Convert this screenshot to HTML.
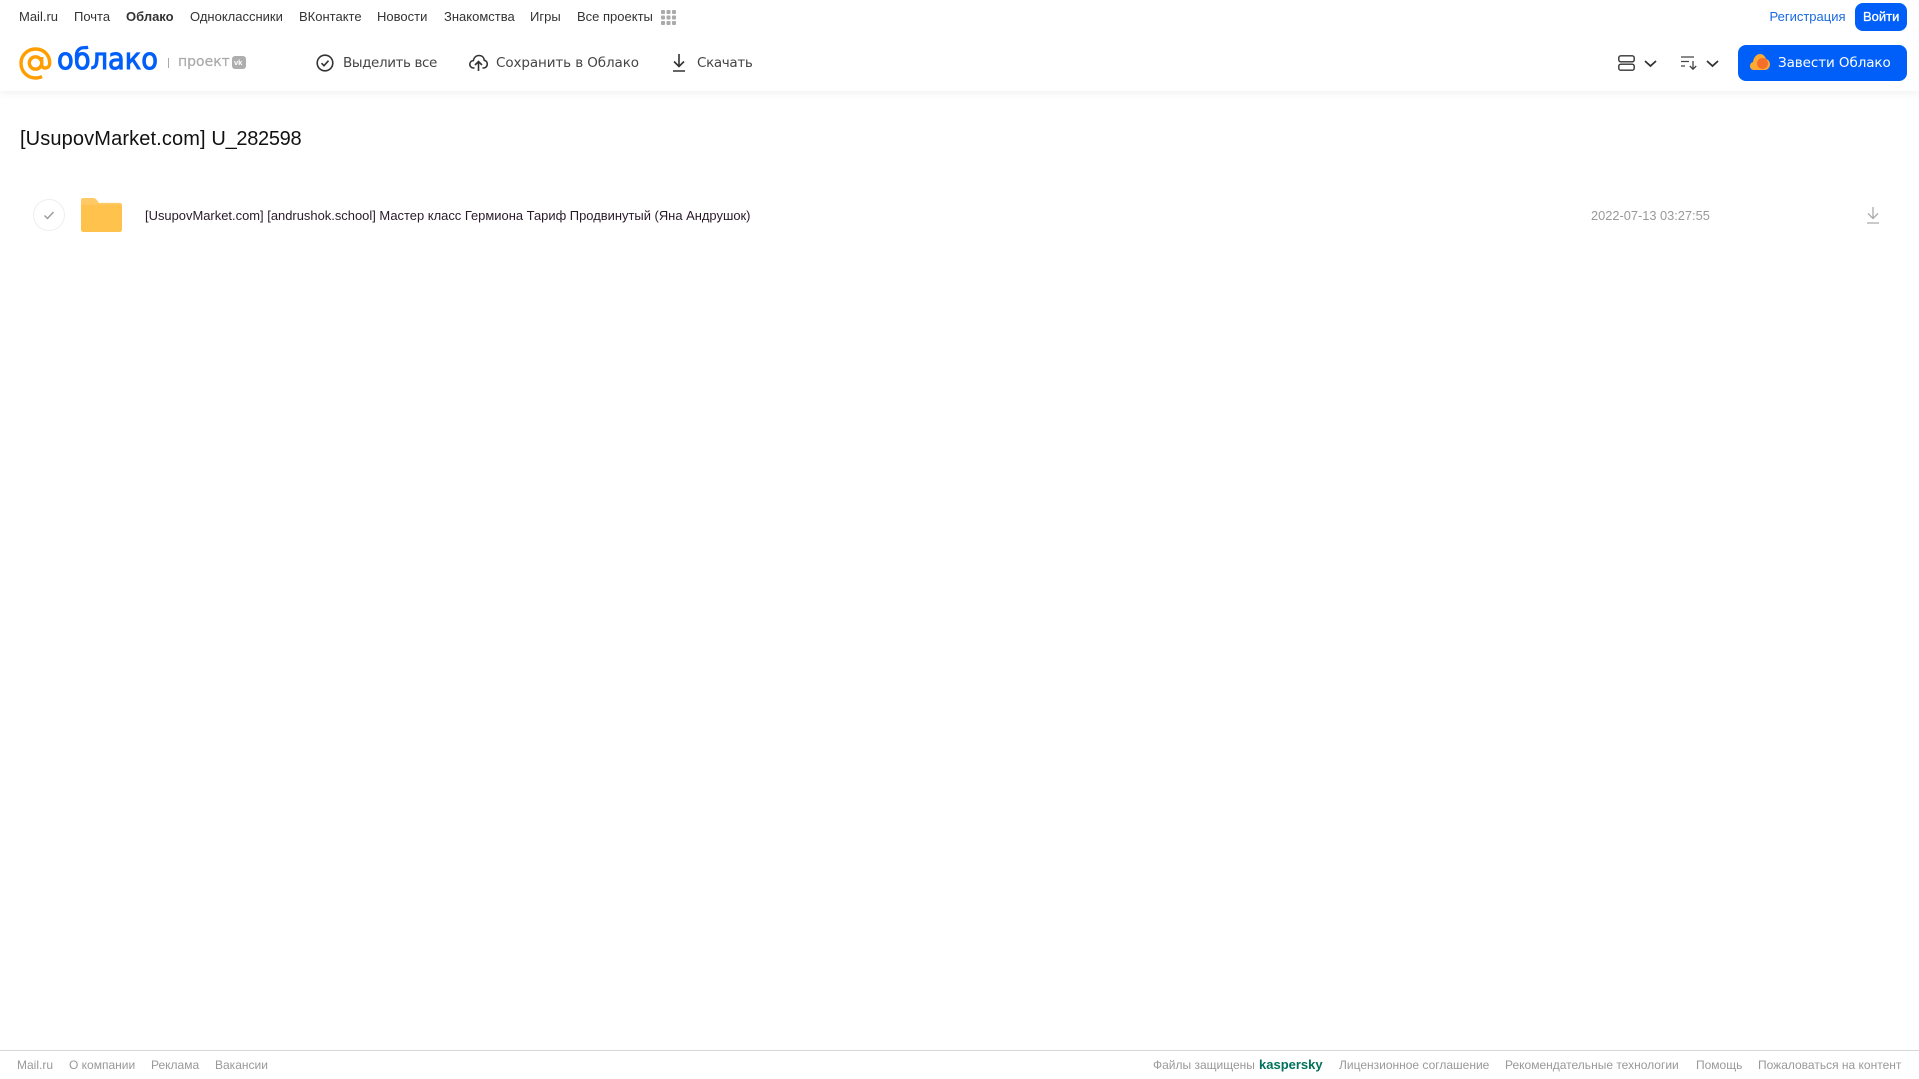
<!DOCTYPE html>
<html lang="ru">
<head>
<meta charset="utf-8">
<title>Облако</title>
<style>
html,body{margin:0;padding:0;background:#fff;}
body{width:1919px;height:1079px;position:relative;overflow:hidden;font-family:"Liberation Sans",sans-serif;}
.t{position:absolute;white-space:nowrap;line-height:16px;}
.n{font-size:13px;top:9px;color:#333;}
.a{font-family:"DejaVu Sans",sans-serif;font-size:13.5px;color:#444;top:55px;}
.f{font-size:12px;top:1057px;color:#999;}
svg{position:absolute;overflow:visible;}
#hdr{position:absolute;left:0;top:0;width:1919px;height:91px;background:#fff;box-shadow:0 2px 8px rgba(0,0,0,.06);}
</style>
</head>
<body>
<div id="hdr"></div>

<span class="t n" style="left:19px">Mail.ru</span>
<span class="t n" style="left:74px">Почта</span>
<span class="t n" style="left:126px;font-weight:bold">Облако</span>
<span class="t n" style="left:190px">Одноклассники</span>
<span class="t n" style="left:299px">ВКонтакте</span>
<span class="t n" style="left:377px">Новости</span>
<span class="t n" style="left:444px">Знакомства</span>
<span class="t n" style="left:530px">Игры</span>
<span class="t n" style="left:577px">Все проекты</span>
<svg style="left:661px;top:10px" width="15" height="15" viewBox="0 0 15 15" fill="#aaa">
<rect x="0" y="0" width="4" height="4" rx="1"/><rect x="5.5" y="0" width="4" height="4" rx="1"/><rect x="11" y="0" width="4" height="4" rx="1"/>
<rect x="0" y="5.5" width="4" height="4" rx="1"/><rect x="5.5" y="5.5" width="4" height="4" rx="1"/><rect x="11" y="5.5" width="4" height="4" rx="1"/>
<rect x="0" y="11" width="4" height="4" rx="1"/><rect x="5.5" y="11" width="4" height="4" rx="1"/><rect x="11" y="11" width="4" height="4" rx="1"/>
</svg>

<span class="t n" style="left:1769.500px;color:#1a6be0">Регистрация</span>
<div style="position:absolute;left:1855px;top:3px;width:52px;height:28px;border-radius:8px;background:#005ff9"></div>
<span class="t n" style="left:1863px;color:#fff;-webkit-text-stroke:.3px #fff">Войти</span>

<!-- logo -->
<svg style="left:19px;top:47px" width="33" height="33" viewBox="0 0 33 33" fill="none" stroke="#ff9e00" stroke-width="3.4">
<circle cx="16.5" cy="16" r="6.2"/>
<path d="M22.7 10v7.5c0 5 7.9 5 8-1.5C30.8 8 24.7 2 16.5 2 8.7 2 2 8.3 2 16.2 2 24.5 8.4 31 16.5 31c2.7 0 4.6-.5 6.5-1.500"/>
</svg>
<svg style="left:57px;top:40px" width="104" height="40">
<text x="0" y="29" font-family="DejaVu Sans, sans-serif" font-size="29" fill="#005ff9" stroke="#005ff9" stroke-width="1" textLength="101" lengthAdjust="spacingAndGlyphs">облако</text>
</svg>
<div style="position:absolute;left:168px;top:58px;width:1px;height:10px;background:#aaa"></div>
<span class="t" style="left:178px;top:54px;font-family:'DejaVu Sans',sans-serif;font-size:14px;color:#aaa;-webkit-text-stroke:.2px #aaa">проект</span>
<div style="position:absolute;left:232px;top:56px;width:14px;height:13px;border-radius:3px;background:#aeaeae"></div>
<span class="t" style="left:234px;top:55px;font-size:7.500px;font-weight:bold;color:#fff">vk</span>

<!-- actions -->
<svg style="left:316px;top:54px" width="18" height="18" viewBox="0 0 18 18" fill="none" stroke="#333" stroke-width="1.600">
<circle cx="9" cy="9" r="7.800"/><path d="M5.500 9.200l2.500 2.500 4.500-5"/>
</svg>
<span class="t a" style="left:343px;letter-spacing:-.4px">Выделить все</span>
<svg style="left:469px;top:54px" width="19" height="18" viewBox="0 0 19 18" fill="none" stroke="#333" stroke-width="1.600">
<path d="M5.500 14H4.500C2 14 .8 12 .8 10.300c0-2 1.500-3.500 3.500-3.700C5 3.500 7.200 1.500 10 1.500c3 0 5 2 5.300 4.800 1.800.3 3 1.900 3 3.700 0 2.200-1.600 4-3.800 4h-1"/>
<path d="M9.500 17V8M6 11l3.500-3.500L13 11"/>
</svg>
<span class="t a" style="left:496px;letter-spacing:-.1px">Сохранить в Облако</span>
<svg style="left:672px;top:54px" width="14" height="18" viewBox="0 0 14 18" fill="none" stroke="#333" stroke-width="1.600">
<path d="M7 0v12M2 7.500L7 12.500l5-5M1 17h12"/>
</svg>
<span class="t a" style="left:697px;letter-spacing:-.35px">Скачать</span>

<svg style="left:1618px;top:55px" width="17" height="16" viewBox="0 0 17 16" fill="none" stroke="#333" stroke-width="1.400">
<rect x=".8" y=".8" width="15.400" height="6" rx="2"/><rect x=".8" y="9.200" width="15.400" height="6" rx="2"/>
</svg>
<svg style="left:1644px;top:60px" width="13" height="7" viewBox="0 0 13 7" fill="none" stroke="#333" stroke-width="1.800"><path d="M1 1l5.500 5L12 1"/></svg>
<svg style="left:1681px;top:56px" width="16" height="14" viewBox="0 0 16 14" fill="none" stroke="#444" stroke-width="1.300">
<path d="M0 1h13M0 5.500h8M0 10h4M12 5v8M8.800 10l3.200 3.200 3.200-3.200"/>
</svg>
<svg style="left:1706px;top:60px" width="13" height="7" viewBox="0 0 13 7" fill="none" stroke="#333" stroke-width="1.800"><path d="M1 1l5.500 5L12 1"/></svg>

<div style="position:absolute;left:1738px;top:45px;width:169px;height:36px;border-radius:8px;background:#005ff9"></div>
<svg style="left:1750px;top:54px" width="20" height="17" viewBox="0 0 20 17">
<path d="M4 16C1.500 16 0 14.300 0 12c0-2 1.200-3.500 3-4C3.500 3.500 6.500 0 10 0c3 0 5 2 6 5 2.500.5 4 3 4 5.500 0 3-2.500 5.500-5 5.500z" fill="#ffa930"/>
<circle cx="12.500" cy="9.500" r="5.500" fill="#f4702a"/>
</svg>
<span class="t a" style="left:1778px;color:#fff;letter-spacing:-.08px">Завести Облако</span>

<!-- content -->
<span class="t" style="left:20px;top:127px;font-size:20px;line-height:24px;color:#111"><span style="letter-spacing:.13px">[UsupovMarket.com] </span><span style="letter-spacing:-.3px">U_282598</span></span>

<svg style="left:33px;top:199px" width="32" height="32" viewBox="0 0 32 32" fill="none">
<circle cx="16" cy="16" r="15.500" stroke="#eee"/>
<path d="M11.500 16.500l3 3 6-6.500" stroke="#999" stroke-width="1.400"/>
</svg>
<svg style="left:81px;top:198px" width="41" height="34" viewBox="0 0 41 35" preserveAspectRatio="none">
<path d="M2 0h10c2 0 3 1 4 2.500L18 5h21c1 0 2 1 2 2v3H0V2c0-1 1-2 2-2z" fill="#ffc964"/>
<path d="M0 7h41v26c0 1-1 2-2 2H2c-1 0-2-1-2-2z" fill="#ffc24d"/>
</svg>
<span class="t" style="left:145px;top:208px;font-size:12.940px;color:#2a1a2a">[UsupovMarket.com] [andrushok.school] Мастер класс Гермиона Тариф Продвинутый (Яна Андрушок)</span>
<span class="t" style="left:1591px;top:208px;font-size:12.800px;color:#999">2022-07-13 03:27:55</span>
<svg style="left:1866px;top:207px" width="14" height="17" viewBox="0 0 14 17" fill="none" stroke="#aaa" stroke-width="1.300">
<path d="M7 0v11.500M2 6.500L7 11.500l5-5M1 16h12"/>
</svg>

<!-- footer -->
<div style="position:absolute;left:0;top:1050px;width:1919px;height:1px;background:#d8d8d8"></div>
<span class="t f" style="left:17px">Mail.ru</span>
<span class="t f" style="left:69px">О компании</span>
<span class="t f" style="left:151px">Реклама</span>
<span class="t f" style="left:215px">Вакансии</span>
<span class="t f" style="left:1153px">Файлы защищены</span>
<span class="t f" style="left:1259px;color:#00725c;font-weight:bold;font-size:13px">kaspersky</span>
<span class="t f" style="left:1339px">Лицензионное соглашение</span>
<span class="t f" style="left:1505px">Рекомендательные технологии</span>
<span class="t f" style="left:1696px">Помощь</span>
<span class="t f" style="left:1758px">Пожаловаться на контент</span>
</body>
</html>
